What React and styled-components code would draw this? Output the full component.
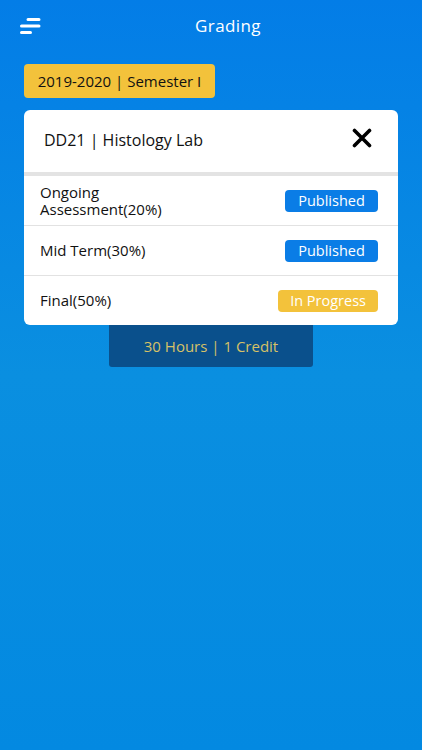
import React from "react";
import styled, { createGlobalStyle } from "styled-components";

const Global = createGlobalStyle`
  html, body { margin: 0; padding: 0; }
  body {
    font-family: "Open Sans", "Noto Sans", sans-serif;
    background: #0a85e3;
  }
  * { box-sizing: border-box; }
`;

const Screen = styled.div`
  width: 422px;
  height: 750px;
  background: linear-gradient(180deg, #037de7 0%, #0a8fe0 50%, #0389e1 100%);
  display: flex;
  flex-direction: column;
  overflow: hidden;
`;

const TopBar = styled.header`
  height: 50px;
  display: grid;
  grid-template-columns: 60px 1fr 26px;
  align-items: center;
  padding-top: 1px;
`;

const MenuButton = styled.button`
  background: none;
  border: 0;
  padding: 0 0 0 19px;
  display: flex;
  align-items: center;
  height: 100%;
`;

const Title = styled.h1`
  margin: 0;
  text-align: center;
  color: #fff;
  font-size: 17px;
  font-weight: 500;
  letter-spacing: 0.4px;
`;

const Content = styled.main`
  display: flex;
  flex-direction: column;
  padding: 14px 24px 0;
`;

const Chip = styled.div`
  align-self: flex-start;
  width: 191px;
  height: 34px;
  border-radius: 4px;
  background: #f3c23b;
  color: #111;
  font-size: 15px;
  display: flex;
  align-items: center;
  justify-content: center;
`;

const Card = styled.section`
  margin-top: 12px;
  background: #fff;
  border-radius: 6px;
  overflow: hidden;
  position: relative;
  z-index: 1;
`;

const CardHead = styled.div`
  height: 66px;
  display: flex;
  align-items: center;
  justify-content: space-between;
  padding: 0 24px 2px 20px;
  border-bottom: 4px solid #e3e3e3;
  font-size: 16px;
  color: #111;
`;

const CloseButton = styled.button`
  background: none;
  border: 0;
  padding: 0;
  width: 24px;
  height: 24px;
  display: flex;
  align-items: center;
  justify-content: center;
  margin-top: -5px;
`;

const Row = styled.div`
  height: ${(p) => (p.$last ? 49 : 50)}px;
  display: flex;
  align-items: center;
  justify-content: space-between;
  padding: 0 20px 0 16px;
  border-bottom: ${(p) => (p.$last ? "none" : "1px solid #e2e2e2")};
`;

const Label = styled.span`
  font-size: 15px;
  line-height: 17px;
  color: #111;
  max-width: 150px;
`;

const Badge = styled.span`
  height: 22px;
  border-radius: 4px;
  padding: 0 12px;
  min-width: 93px;
  display: inline-flex;
  align-items: center;
  justify-content: center;
  font-size: 14.5px;
  color: #fff;
  background: ${(p) => (p.$tone === "warn" ? "#f3c23b" : "#0a7de6")};
`;

const CreditBox = styled.div`
  align-self: center;
  width: 204px;
  height: 42px;
  border-radius: 0 0 3px 3px;
  background: #0a508c;
  color: #d6c167;
  font-size: 15px;
  display: flex;
  align-items: center;
  justify-content: center;
`;

const MenuIcon = () => (
  <svg width="22" height="20" viewBox="0 0 22 20" fill="none">
    <path d="M9 3.5h11M2.5 10h17.5M2.5 16.5h9" stroke="#fff" strokeWidth="3" strokeLinecap="round" />
  </svg>
);

const CloseIcon = () => (
  <svg width="20" height="20" viewBox="0 0 20 20" fill="none">
    <path d="M2.5 2.5l15 15M17.5 2.5l-15 15" stroke="#000" strokeWidth="3.6" strokeLinecap="round" />
  </svg>
);

const rows = [
  { label: "Ongoing Assessment(20%)", status: "Published", tone: "info" },
  { label: "Mid Term(30%)", status: "Published", tone: "info" },
  { label: "Final(50%)", status: "In Progress", tone: "warn" },
];

export default function App() {
  return (
    <Screen>
      <Global />
      <TopBar>
        <MenuButton aria-label="menu">
          <MenuIcon />
        </MenuButton>
        <Title>Grading</Title>
        <span />
      </TopBar>
      <Content>
        <Chip>2019-2020 | Semester I</Chip>
        <Card>
          <CardHead>
            <span>DD21 | Histology Lab</span>
            <CloseButton aria-label="close">
              <CloseIcon />
            </CloseButton>
          </CardHead>
          {rows.map((r, i) => (
            <Row key={r.label} $last={i === rows.length - 1}>
              <Label>{r.label}</Label>
              <Badge $tone={r.tone}>{r.status}</Badge>
            </Row>
          ))}
        </Card>
        <CreditBox>30 Hours | 1 Credit</CreditBox>
      </Content>
    </Screen>
  );
}
